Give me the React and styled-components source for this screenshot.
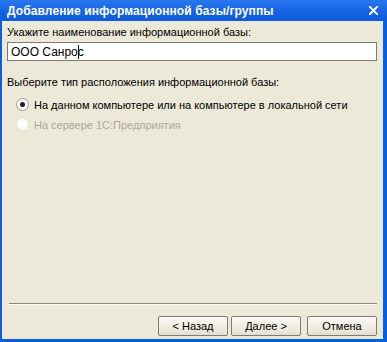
import React from "react";
import styled, { createGlobalStyle } from "styled-components";

const GlobalStyle = createGlobalStyle`
  html, body {
    margin: 0;
    padding: 0;
    background: #ece9d8;
  }
  body {
    font-family: "Liberation Sans", Arial, sans-serif;
    font-size: 11px;
  }
`;

export default function App() {
  return (
    <>
      <GlobalStyle />
      <Window>
        <TitleBar>
          <Title>Добавление информационной базы/группы</Title>
          <CloseIcon viewBox="0 0 10 10">
            <path d="M1 1 L9 9 M9 1 L1 9" stroke="#fff" strokeWidth="2.2" strokeLinecap="square" />
          </CloseIcon>
        </TitleBar>
        <Body>
          <Label>Укажите наименование информационной базы:</Label>
          <Input>
            ООО Санро<Caret />с
          </Input>
          <Label top={15}>Выберите тип расположения информационной базы:</Label>
          <Options>
            <Option>
              <Radio checked />
              На данном компьютере или на компьютере в локальной сети
            </Option>
            <Option disabled>
              <Radio disabled />
              На сервере 1С:Предприятия
            </Option>
          </Options>
          <Separator />
          <Buttons>
            <Button>&lt; Назад</Button>
            <Button>Далее &gt;</Button>
            <Button gap={3}>Отмена</Button>
          </Buttons>
        </Body>
      </Window>
    </>
  );
}

const Window = styled.div`
  width: 387px;
  height: 342px;
  box-sizing: border-box;
  background: #0a5fdc;
  padding: 0 4px 3px 2px;
  display: flex;
  flex-direction: column;
`;

const TitleBar = styled.div`
  height: 21px;
  margin: 0 -4px 0 -2px;
  padding: 0 9px 0 7px;
  background: linear-gradient(#2777ee, #1461e2 60%, #0f5bdc);
  display: flex;
  align-items: center;
  justify-content: space-between;
`;

const Title = styled.div`
  color: #fff;
  font-family: "Liberation Sans", Arial, sans-serif;
  font-weight: bold;
  font-size: 12px;
  letter-spacing: 0.1px;
  white-space: nowrap;
`;

const CloseIcon = styled.svg`
  width: 9px;
  height: 9px;
`;

const Body = styled.div`
  flex: 1;
  background: #ece9d8;
  padding: 5px 6px 3px 5px;
  display: flex;
  flex-direction: column;
`;

const Label = styled.div`
  color: #000;
  line-height: 13px;
  white-space: nowrap;
  margin-top: ${(p) => p.top || 0}px;
`;

const Input = styled.div`
  margin-top: 3px;
  height: 19px;
  box-sizing: border-box;
  border: 1px solid #7f7d73;
  background: #fff;
  padding: 0 3px;
  display: flex;
  align-items: center;
  font-size: 12px;
  color: #000;
`;

const Caret = styled.span`
  display: inline-block;
  width: 1px;
  height: 14px;
  background: #000;
  margin-right: -1px;
`;

const Options = styled.div`
  margin-top: 9px;
  padding-left: 9px;
  display: flex;
  flex-direction: column;
  gap: 7px;
`;

const Option = styled.div`
  display: flex;
  align-items: center;
  gap: 5px;
  height: 13px;
  white-space: nowrap;
  color: ${(p) => (p.disabled ? "#aca899" : "#000")};
`;

const Radio = styled.span`
  width: 13px;
  height: 13px;
  box-sizing: border-box;
  border-radius: 50%;
  border: 1px solid ${(p) => (p.disabled ? "#e6e3d6" : "#a3a193")};
  background: ${(p) => (p.disabled ? "#fff" : "radial-gradient(circle, #fff 55%, #e2e0d6)")};
  display: flex;
  align-items: center;
  justify-content: center;
  &::after {
    content: "";
    width: 5px;
    height: 5px;
    border-radius: 50%;
    background: #1d1d1d;
    display: ${(p) => (p.checked ? "block" : "none")};
  }
`;

const Separator = styled.div`
  margin-top: auto;
  margin-left: 2px;
  height: 1px;
  background: #8c897e;
  border-bottom: 1px solid #fdfcf9;
`;

const Buttons = styled.div`
  margin-top: 11px;
  display: flex;
  justify-content: flex-end;
  gap: 3px;
`;

const Button = styled.button`
  width: 70px;
  height: 20px;
  margin-left: ${(p) => p.gap || 0}px;
  box-sizing: border-box;
  border: 1px solid #7f7d73;
  border-radius: 2px;
  background: linear-gradient(#faf9f5, #ede9dc 70%, #e2ded0);
  font-family: "Liberation Sans", Arial, sans-serif;
  font-size: 11px;
  color: #000;
  padding: 0;
`;
